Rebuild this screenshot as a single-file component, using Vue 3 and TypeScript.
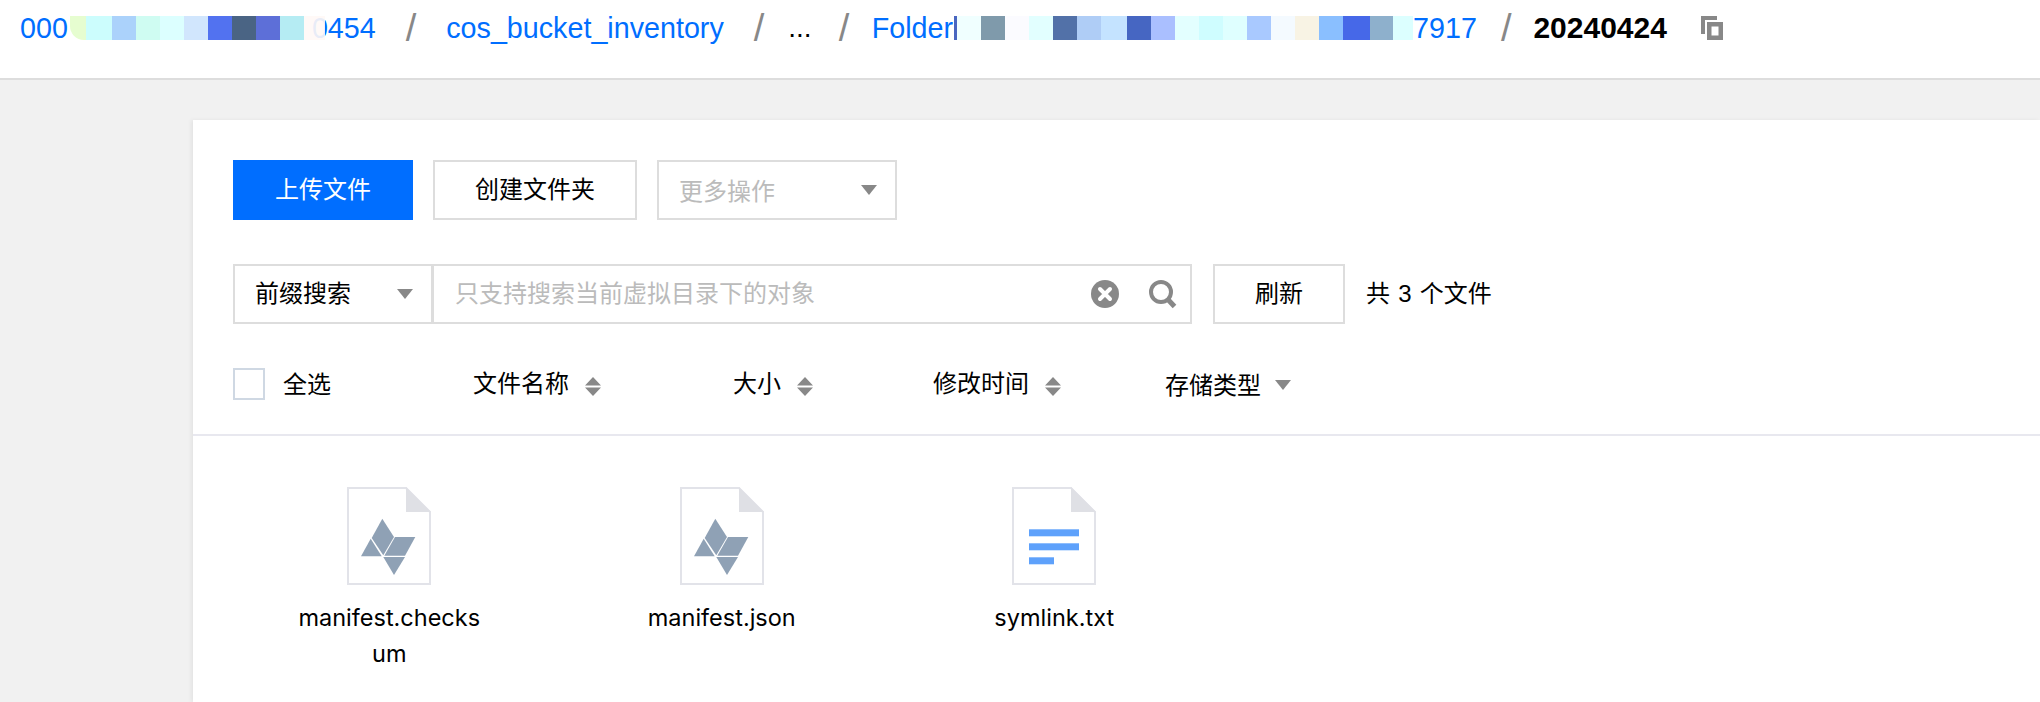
<template>
  <div class="page">
    <header class="topbar">
      <a class="crumb first">000</a>
      <span class="blur blur-a">
        <i v-for="(c, i) in blurA" :key="i" :style="{ background: c }"></i>
      </span>
      <a class="crumb">0454</a>
      <span class="sep s1">/</span>
      <a class="crumb">cos_bucket_inventory</a>
      <span class="sep s2">/</span>
      <span class="more">...</span>
      <span class="sep s3">/</span>
      <a class="crumb">Folder</a>
      <span class="sliver"></span>
      <span class="blur blur-b">
        <i v-for="(c, i) in blurB" :key="i" :style="{ background: c }"></i>
      </span>
      <a class="crumb">7917</a>
      <span class="sep s4">/</span>
      <strong class="current">20240424</strong>
      <svg class="copy" width="22" height="24" viewBox="0 0 22 24">
        <path d="M0 0h16v4H4v14H0z" fill="#888" />
        <path d="M6 6h16v18H6zM10.500 10.500v9h7v-9z" fill="#888" fill-rule="evenodd" />
      </svg>
    </header>

    <main class="content">
      <section class="card">
        <div class="toolbar">
          <div class="row">
            <button class="btn primary">上传文件</button>
            <button class="btn create">创建文件夹</button>
            <div class="btn dropdown disabled">
              <span>更多操作</span>
              <i class="caret"></i>
            </div>
          </div>
          <div class="row second">
            <div class="btn dropdown prefix">
              <span>前缀搜索</span>
              <i class="caret"></i>
            </div>
            <div class="search">
              <span class="placeholder">只支持搜索当前虚拟目录下的对象</span>
              <svg class="clear" width="28" height="28" viewBox="0 0 28 28">
                <circle cx="14" cy="14" r="14" fill="#888" />
                <path d="M9 9l10 10M19 9L9 19" stroke="#fff" stroke-width="4" stroke-linecap="round" />
              </svg>
              <svg class="glass" width="28" height="29" viewBox="0 0 28 29">
                <circle cx="12" cy="12" r="10" fill="none" stroke="#888" stroke-width="4" />
                <path d="M18.500 19l7 7.500" stroke="#888" stroke-width="5" />
              </svg>
            </div>
            <button class="btn refresh">刷新</button>
            <span class="total">共 3 个文件</span>
          </div>
        </div>

        <div class="thead">
          <label class="check-all"><i class="checkbox"></i><span>全选</span></label>
          <div v-for="h in sortable" :key="h" class="th">
            {{ h }}
            <svg width="16" height="19" viewBox="0 0 16 19">
              <path d="M8 0l8 8.500H0zM0 10.500h16L8 19z" fill="#888" />
            </svg>
          </div>
          <div class="th type">存储类型 <i class="caret"></i></div>
        </div>

        <div class="files">
          <div v-for="f in files" :key="f.name" class="file">
            <svg width="84" height="98" viewBox="0 0 84 98">
              <path d="M1 1h58l24 24v72H1z" fill="#fff" stroke="#e2e3e9" stroke-width="2" />
              <path d="M59 0l25 25H59z" fill="#dfe0e5" />
              <g v-if="f.kind === 'inventory'" fill="#8fa1b5">
                <path d="M35.300 31.700L47 50 36.300 68.300 24.700 51z" />
                <path d="M23.700 51.700l11 17.600H14z" />
                <path d="M48 50h20.300L58 68.700H37.300z" />
                <path d="M36.300 70H58L47 88z" />
              </g>
              <g v-else fill="#5ea1fb">
                <rect x="17" y="42.300" width="50" height="7" />
                <rect x="17" y="56.300" width="50" height="7" />
                <rect x="17" y="70.300" width="25" height="7" />
              </g>
            </svg>
            <p class="name">{{ f.name }}</p>
          </div>
        </div>
      </section>
    </main>
  </div>
</template>

<script setup lang="ts">
interface FileItem {
  name: string
  kind: 'inventory' | 'text'
}

// the pixelated parts of the bucket and folder names
const blurA: string[] = [
  '#e6fdd0', '#ccfdfd', '#abd2fb', '#cffcf2', '#dcffff', '#d1e6fd',
  '#5272f0', '#4a6484', '#5d6fd8', '#b5ecf3', '#fff8f6e8'
]
const blurB: string[] = [
  '#f0ffff', '#7f9aab', '#fbfbff', '#e2ffff', '#5271a8', '#afcdf6', '#c4e3ff',
  '#4666c2', '#aabfff', '#e3ffff', '#cffdff', '#dfffff', '#a9c9ff', '#f4faff',
  '#f8f3e4', '#8abfff', '#4668e8', '#8eb0cc', '#dcffff'
]

const sortable: string[] = ['文件名称', '大小', '修改时间']

const files: FileItem[] = [
  { name: 'manifest.checksum', kind: 'inventory' },
  { name: 'manifest.json', kind: 'inventory' },
  { name: 'symlink.txt', kind: 'text' }
]
</script>

<style>
html, body { margin: 0; overflow: hidden; }
</style>

<style scoped>
.page {
  height: 702px;
  display: flex;
  flex-direction: column;
  overflow: hidden;
  color: #000;
  font-family: "Liberation Sans", "Noto Sans CJK SC", sans-serif;
  font-size: 24px;
}
.topbar {
  flex: none;
  box-sizing: border-box;
  height: 80px;
  padding: 16px 0 0 20px;
  display: flex;
  align-items: flex-start;
  background: #fff;
  border-bottom: 2px solid #ddd;
  white-space: nowrap;
}
.crumb, .more, .current, .sep { line-height: 24px; }
.crumb { color: #006eff; font-size: 28.700px; }
.blur { display: flex; height: 24px; position: relative; z-index: 1; }
.blur i { width: 24px; flex: none; }
.blur-a { margin-left: 2px; margin-right: -13px; }
.blur-a i:first-child { width: 16px; border-radius: 0 0 0 14px; }
.blur-a i:nth-child(2) { width: 26px; }
.blur-a i:last-child { width: 21px; }
.sliver { width: 3px; height: 24px; margin-left: 1px; background: #4a66c0; }
.blur-b i:nth-child(7) { width: 26px; }
.blur-b i:nth-child(17) { width: 27px; }
.blur-b i:nth-child(18) { width: 23px; }
.blur-b i:nth-child(19) { width: 20px; }
.sep { color: #888; font-size: 38px; font-weight: 400; }
.s1 { margin: 0 30px; }
.s2 { margin: 0 24px 0 30px; }
.s3 { margin: 0 22.500px 0 27px; }
.s4 { margin: 0 22px 0 24px; }
.more { font-size: 28px; }
.current { font-size: 30px; font-weight: 700; }
.copy { margin-left: 34px; }

.content {
  flex: 1;
  min-height: 0;
  padding: 40px 0 0 193px;
  background: #f1f1f1;
}
.card {
  height: 100%;
  background: #fff;
  box-shadow: -2px 0 4px rgba(0, 0, 0, 0.06);
}
.toolbar { padding: 40px 40px 0; }
.row { display: flex; align-items: center; }
.second { margin-top: 44px; }
.btn {
  box-sizing: border-box;
  height: 60px;
  display: flex;
  align-items: center;
  justify-content: center;
  padding: 0 0 6px;
  background: #fff;
  border: 2px solid #ddd;
  color: #000;
  font: inherit;
}
.primary { width: 180px; background: #006eff; border-color: #006eff; color: #fff; }
.create { width: 204px; margin-left: 20px; }
.dropdown { justify-content: space-between; padding: 0 18px 6px 20px; }
.dropdown .caret { margin-top: 6px; }
.disabled { width: 240px; margin-left: 20px; color: #bbb; }
.disabled span { margin-top: 4px; }
.caret {
  display: block;
  width: 0;
  height: 0;
  border-left: 8px solid transparent;
  border-right: 8px solid transparent;
  border-top: 10px solid #888;
}
.prefix { width: 200px; padding-left: 20px; }
.search {
  box-sizing: border-box;
  width: 760px;
  height: 60px;
  margin-left: -1px;
  padding: 0 13px 0 21px;
  display: flex;
  align-items: center;
  border: 2px solid #ddd;
}
.placeholder { flex: 1; color: #bbb; padding-bottom: 5px; }
.glass { margin-left: 30px; }
.refresh { width: 132px; margin-left: 21px; }
.total { margin-left: 21px; padding-bottom: 5px; word-spacing: 1.500px; }

.thead {
  display: grid;
  grid-template-columns: 240px 260px 200px 232px auto;
  align-items: center;
  padding: 44px 40px 34px;
  border-bottom: 2px solid #e8e8ef;
  line-height: 32px;
}
.check-all { display: flex; align-items: center; }
.check-all span { padding-top: 2px; line-height: 30px; }
.checkbox {
  box-sizing: border-box;
  width: 32px;
  height: 32px;
  margin-right: 18px;
  border: 2px solid #cfd8e3;
}
.th { display: flex; align-items: center; gap: 16px; }
.th svg { margin-top: 5px; }
.th.type { margin-top: 4px; line-height: 28px; gap: 14px; }
.th.type .caret { margin-top: -2px; }

.files {
  display: grid;
  grid-template-columns: repeat(3, 332.500px);
  padding: 51px 0 0 30px;
}
.file {
  display: flex;
  flex-direction: column;
  align-items: center;
}
.name {
  width: 184px;
  margin: 15px 0 0;
  font-family: Inter, "Noto Sans CJK SC", sans-serif;
  font-size: 23.500px;
  line-height: 36px;
  text-align: center;
  word-break: break-all;
}
</style>
